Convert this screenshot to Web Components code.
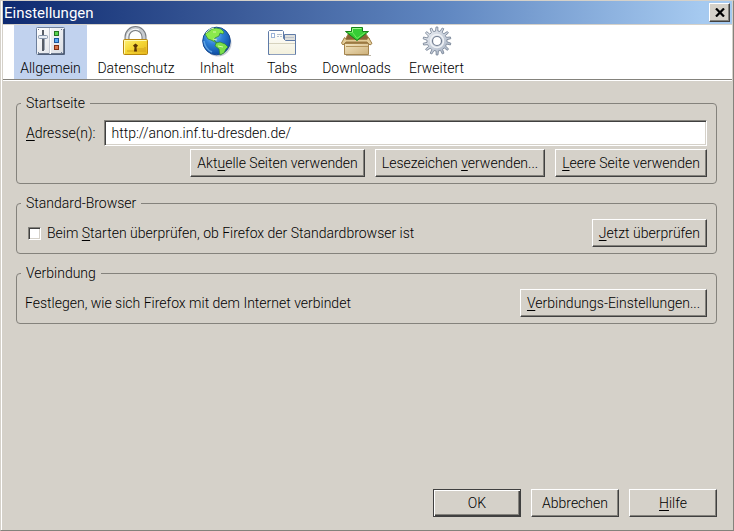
<!DOCTYPE html>
<html lang="de">
<head>
<meta charset="utf-8">
<title>Einstellungen</title>
<style>
  html, body { margin: 0; height: 100%; }
  body {
    --face: #d5d1c9;
    --shade: #84827c;
    --dark: #404040;
    font: 300 14px/16px Roboto, "Liberation Sans", sans-serif;
    color: #000;
    background: var(--face);
  }
</style>
</head>
<body>
<pref-window heading="Einstellungen">
  <pref-toolbar slot="toolbar"></pref-toolbar>
  <pref-group heading="Startseite">
    <pref-address></pref-address>
    <pref-row align="end">
      <pref-button>Akt<u>u</u>elle Seiten verwenden</pref-button>
      <pref-button>Lesezeichen <u>v</u>erwenden...</pref-button>
      <pref-button><u>L</u>eere Seite verwenden</pref-button>
    </pref-row>
  </pref-group>
  <pref-group heading="Standard-Browser">
    <pref-row>
      <pref-check>Beim <u>S</u>tarten überprüfen, ob Firefox der Standardbrowser ist</pref-check>
      <pref-button><u>J</u>etzt überprüfen</pref-button>
    </pref-row>
  </pref-group>
  <pref-group heading="Verbindung">
    <pref-row>
      <span>Festlegen, wie sich Firefox mit dem Internet verbindet</span>
      <pref-button><u>V</u>erbindungs-Einstellungen...</pref-button>
    </pref-row>
  </pref-group>
  <pref-button slot="actions" size="dialog" primary>OK</pref-button>
  <pref-button slot="actions" size="dialog">Abbrechen</pref-button>
  <pref-button slot="actions" size="dialog"><u>H</u>ilfe</pref-button>
</pref-window>

<script>
class Base extends HTMLElement {
  constructor() {
    super();
    this.attachShadow({ mode: 'open' }).innerHTML = this.render();
  }
  render() { return '<slot></slot>'; }
}

customElements.define('pref-window', class extends Base {
  render() {
    return `<style>
      :host { display: flex; flex-direction: column; box-sizing: border-box; min-height: 100vh;
        background: var(--face); border: 1px solid; border-color: var(--face) var(--shade) var(--shade) var(--face); }
      header { display: flex; align-items: center; justify-content: space-between; height: 23px;
        margin: 0 1px 1px; padding: 0 2px 0 1px; box-sizing: border-box;
        background: linear-gradient(90deg, #0e2a70, #3c5c9a 33%, #5f86c0 60%, #a6caf0 96%); }
      h1 { margin: 0; font: 400 15px/16px Roboto, "Liberation Sans", sans-serif; color: #fff; }
      .close { width: 21px; height: 19px; padding: 0; display: grid; place-items: center; background: var(--face);
        border: 1px solid; border-color: #fff var(--dark) var(--dark) #fff; box-shadow: inset -1px -1px var(--shade); }
      .page { flex: 1; display: flex; flex-direction: column; border-left: 1px solid #fff; }
      main { display: flex; flex-direction: column; gap: 11px; padding: 14px 16px 0 14px; }
      footer { display: flex; justify-content: flex-end; gap: 10px; margin-top: auto; padding: 12px 16px 13px; }
    </style>
    <div class="page">
      <header><h1></h1><button class="close" aria-label="Schließen">
        <svg width="10" height="9" viewBox="0 0 10 9" aria-hidden="true"><path d="M1 .5l8 8M9 .5l-8 8" stroke="#000" stroke-width="2.200"/></svg>
      </button></header>
      <slot name="toolbar"></slot>
      <main><slot></slot></main>
      <footer><slot name="actions"></slot></footer>
    </div>`;
  }
  connectedCallback() { this.shadowRoot.querySelector('h1').textContent = this.getAttribute('heading'); }
});

const ICONS = {
  general: `<defs><linearGradient id="g" x2="1" y2="1"><stop stop-color="#fff"/><stop offset="1" stop-color="#d9dde3"/></linearGradient></defs>
    <rect x="1.500" y="2.500" width="28" height="27" rx="1" fill="url(#g)" stroke="#6d7f9b"/>
    <path d="M29 4v25H3" fill="none" stroke="#44546e" stroke-width="1.500"/>
    <path d="M14.500 3v26" stroke="#c3c9d3"/><path d="M15.500 3v26" stroke="#fff"/>
    <path d="M8 5v21" stroke="#252c38" stroke-width="1.500"/>
    <path d="M9.500 13v12" stroke="#9aa4b2"/>
    <rect x="3.500" y="10.500" width="9" height="3" rx="1" fill="#e9eef4" stroke="#8695aa"/>
    <g><rect x="19.500" y="6.500" width="4" height="4" fill="#57d34e" stroke="#237322"/>
    <rect x="19.500" y="13.500" width="4" height="4" fill="#58a8f2" stroke="#1b559b"/>
    <rect x="19.500" y="20.500" width="4" height="4" fill="#d9754a" stroke="#7e3014"/></g>
    <path d="M3 4.500h1M26 4.500h1M3 27.500h1M26 27.500h1" stroke="#6d7f9b"/>`,
  privacy: `<defs><linearGradient id="g" x2="1" y2="1"><stop stop-color="#fff27c"/><stop offset=".45" stop-color="#f6d936"/><stop offset="1" stop-color="#e4b51c"/></linearGradient></defs>
    <path d="M7 17v-5a8 8 0 0 1 17 0v5" fill="none" stroke="#777b80" stroke-width="5"/>
    <path d="M7 17v-5a8 8 0 0 1 17 0v5" fill="none" stroke="#c6cace" stroke-width="3"/>
    <path d="M7 16v-4a8.500 8.500 0 0 1 12-7" fill="none" stroke="#fff"/>
    <rect x="3.500" y="14.500" width="24" height="15" rx="1" fill="url(#g)" stroke="#b8860d"/>
    <path d="M4.500 28.500v-13h22" fill="none" stroke="#fffab0"/>
    <path d="M17 23h7v-1h2v5H7v-2h10z" fill="#d6a51d" opacity=".55"/>
    <path d="M15.500 18.500l2.500 2-1.500 2 .5 4h-3l.5-4-1.500-2z" fill="#5b3605"/>`,
  content: `<defs><radialGradient id="g" cx=".38" cy=".28" r=".75"><stop stop-color="#8fd0fb"/><stop offset=".45" stop-color="#2e7fd6"/><stop offset="1" stop-color="#0b4aa0"/></radialGradient></defs>
    <ellipse cx="17" cy="18" rx="13.500" ry="13.500" fill="#8994a8" opacity=".5"/>
    <circle cx="15.500" cy="16" r="13.800" fill="url(#g)" stroke="#174a92"/>
    <path d="M7 7q4-4 8-4l5 1 3 3-1 2-3-1-1 3-4 2-1 2 3 3-2-1-4-2-3-1-3-5z" fill="#8bea4c" stroke="#2d7f35" stroke-width=".7"/>
    <path d="M15 18l4-1 5 2 3 3-2 2-2 4-4 2-1-6-4-3z" fill="#7be04a" stroke="#2d7f35" stroke-width=".7"/>
    <path d="M5 8q4-5 8-5M12 7h3M17 21l5 1M12 14l4 1" stroke="#d7f8a8" fill="none"/>
    <path d="M3 16q1 8 8 11" stroke="#79b9ef" fill="none" stroke-width="1.500" opacity=".7"/>`,
  tabs: `<defs><linearGradient id="g" x2="0" y2="1"><stop stop-color="#fff"/><stop offset="1" stop-color="#f3f0dc"/></linearGradient></defs>
    <path d="M18.500 9.500h11v9h-11z" fill="#dedfdc" stroke="#5f7ba8"/>
    <path d="M2.500 29.500v-23l1-1h13l1 1v7l2 2h10v14z" fill="url(#g)" stroke="#5f7ba8"/>
    <path d="M3 18.500h26" stroke="#d6d2be"/><path d="M4 29.500h26" stroke="#8d9fbd"/>
    <path d="M19 12.500h9" stroke="#bec4cc"/>
    <rect x="5.500" y="8.500" width="3" height="4" fill="#fff" stroke="#9cb4d8"/>
    <path d="M11 9.500h5M11 11.500h2m1 0h2" stroke="#b3bfce"/>`,
  downloads: `<defs><linearGradient id="g" x2="1" y2="1"><stop stop-color="#f3e6c2"/><stop offset="1" stop-color="#cdb07a"/></linearGradient></defs>
    <path d="M4.500 14l3-5.500h17l4 5.500v4h-24z" fill="#8a6438" stroke="#a6803f"/>
    <path d="M5 30.500h25" stroke="#bcb5a6"/>
    <path d="M3.500 18.500h24v11h-24z" fill="url(#g)" stroke="#a5854e"/>
    <path d="M3.500 12.500l-3 5.500 1.500 2 3-3h21l3 3 2-1.500-3.500-6-1.500 2H5z" fill="#e3cc98" stroke="#a08048"/>
    <path d="M5 21.500h22" stroke="#b4945a"/>
    <path d="M10.500 2.500h11v4h6L16 15.500 4.500 6.500h6z" fill="#36cc35" stroke="#168018"/>
    <path d="M11.500 7.500v-4h9" fill="none" stroke="#a1f48b"/><path d="M7.500 7.500h4l4.500 6 8-6" fill="none" stroke="#6fe95e"/>`,
  advanced: `<defs><linearGradient id="g" x2="1" y2="1"><stop stop-color="#f3f5f8"/><stop offset=".5" stop-color="#cbd2dd"/><stop offset="1" stop-color="#a2aec0"/></linearGradient></defs>
    <path id="gear" fill="url(#g)" stroke="#7b8799" stroke-width=".9"/>
    <circle cx="16" cy="16" r="6.500" fill="none" stroke="#eef1f5" stroke-width="1.500"/>
    <circle cx="16" cy="16" r="4.500" fill="#fff" stroke="#727e91" stroke-width="1.200"/>`
};

/* Outline of a wheel with the given number of pointed teeth. */
function gearPath(teeth) {
  const at = (r, a) => (16 + r * Math.sin(a)).toFixed(2) + ' ' + (16 - r * Math.cos(a)).toFixed(2);
  const step = 2 * Math.PI / teeth;
  let d = '';
  for (let i = 0; i < teeth; i++) {
    const a = i * step;
    d += (i ? 'L' : 'M') + at(10, a - step * .32) + 'L' + at(14, a - step * .15) + 'L' + at(14, a + step * .13) + 'L' + at(10, a + step * .2);
  }
  return d + 'Z';
}

customElements.define('pref-icon', class extends Base {
  render() { return `<style>:host { display: block; height: 32px; } svg { display: block; }</style><svg width="32" height="32" viewBox="0 0 32 32" aria-hidden="true"></svg>`; }
  connectedCallback() {
    this.shadowRoot.querySelector('svg').innerHTML = ICONS[this.getAttribute('name')];
    const gear = this.shadowRoot.getElementById('gear');
    if (gear) gear.setAttribute('d', gearPath(14));
  }
});

customElements.define('pref-toolbar', class extends Base {
  render() {
    const items = [['general', 'Allgemein'], ['privacy', 'Datenschutz'], ['content', 'Inhalt'], ['tabs', 'Tabs'], ['downloads', 'Downloads'], ['advanced', 'Erweitert']];
    return `<style>
      :host { display: grid; grid-template-columns: 73px 98px 64px 66px 83px 77px; margin: 0 1px 1px; height: 55px;
        padding-left: 11px; box-sizing: border-box; background: #fff; border-bottom: 1px solid var(--shade); box-shadow: 0 1px #fff; }
      button { display: flex; flex-direction: column; align-items: center; gap: 3px; border: 0; padding: 0; background: none; font: inherit; color: inherit; white-space: nowrap; }
      button[aria-pressed=true] { background: #c1d2ee; }
    </style>` + items.map(([n, t], i) => `<button aria-pressed="${i === 0}"><pref-icon name="${n}"></pref-icon><span>${t}</span></button>`).join('');
  }
});

customElements.define('pref-group', class extends Base {
  render() {
    return `<style>
      :host { display: block; }
      fieldset { margin: 0; min-width: 0; border: 1px solid var(--shade); border-radius: 4px; padding: 8px 9px 6px 8px; }
      legend { margin-left: -4px; padding: 0 5px; }
    </style><fieldset><legend></legend><slot></slot></fieldset>`;
  }
  connectedCallback() { this.shadowRoot.querySelector('legend').textContent = this.getAttribute('heading'); }
});

customElements.define('pref-row', class extends Base {
  render() {
    return `<style>
      :host { display: flex; align-items: center; justify-content: space-between; gap: 10px; }
      :host([align=end]) { justify-content: flex-end; }
    </style><slot></slot>`;
  }
});

customElements.define('pref-address', class extends Base {
  render() {
    return `<style>
      :host { display: flex; align-items: center; gap: 9px; padding: 1px 0 3px 1px; }
      u { text-underline-offset: 2px; }
      input { flex: 1; min-width: 0; height: 26px; box-sizing: border-box; padding: 0 6px; font: inherit; color: inherit; background: #fff;
        border: 1px solid; border-color: var(--shade) #fff #fff var(--shade); box-shadow: inset 1px 1px var(--dark), inset -1px -1px var(--face); outline: 0; }
    </style><label for="a"><u>A</u>dresse(n):</label><input id="a" type="text" value="http://anon.inf.tu-dresden.de/">`;
  }
});

customElements.define('pref-check', class extends Base {
  render() {
    return `<style>
      :host { display: block; }
      label { display: flex; align-items: center; gap: 6px; padding-left: 3px; }
      input { appearance: none; margin: 0; width: 13px; height: 13px; background: #fff;
        border: 1px solid; border-color: var(--shade) #fff #fff var(--shade); box-shadow: inset 1px 1px var(--dark), inset -1px -1px var(--face); }
      ::slotted(u) { text-underline-offset: 2px; }
    </style><label><input type="checkbox"><span><slot></slot></span></label>`;
  }
});

customElements.define('pref-button', class extends Base {
  render() {
    return `<style>
      :host { display: block; }
      button { height: 28px; padding: 0 6px; font: inherit; color: inherit; background: var(--face); white-space: nowrap;
        border: 1px solid; border-color: #fff var(--dark) var(--dark) #fff; box-shadow: inset -1px -1px var(--shade); }
      :host([size=dialog]) button { width: 88px; }
      :host([primary]) button { border-color: var(--dark); box-shadow: inset 1px 1px #fff, inset -1px -1px var(--dark), inset -2px -2px var(--shade); }
      ::slotted(u) { text-underline-offset: 2px; }
    </style><button><slot></slot></button>`;
  }
});
</script>
</body>
</html>
